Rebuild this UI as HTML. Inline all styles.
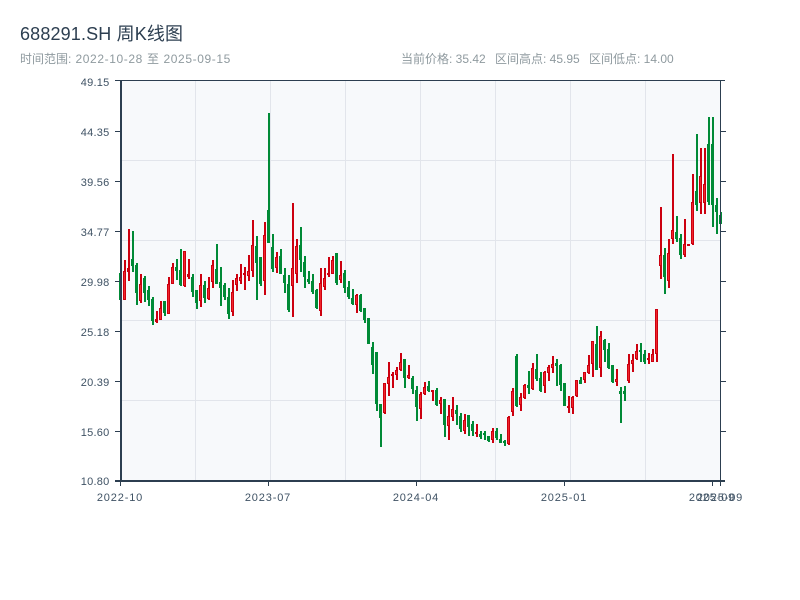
<!DOCTYPE html>
<html><head><meta charset="utf-8"><title>688291.SH 周K线图</title>
<style>
html,body{margin:0;padding:0;background:#fff;width:800px;height:600px;overflow:hidden}
svg{display:block;position:absolute;left:0;top:0}
text{font-family:"Liberation Sans","Noto Sans CJK SC",sans-serif}
.t{font-size:18px;fill:#2c3e50;letter-spacing:.15px}
.s{font-size:12px;fill:#8f9a9f}
.a{font-size:11px;fill:#3f5264;letter-spacing:.25px}
.x{font-size:11px;fill:#3f5264;letter-spacing:.85px}
.d{letter-spacing:.6px}
</style></head><body>
<svg width="800" height="600" viewBox="0 0 800 600" xmlns="http://www.w3.org/2000/svg">
<rect x="120" y="81" width="600" height="400" fill="#f7f9fb"/>
<path shape-rendering="crispEdges" fill="#e2e5eb" d="M195 81h1v400h-1zM270 81h1v400h-1zM345 81h1v400h-1zM420 81h1v400h-1zM495 81h1v400h-1zM570 81h1v400h-1zM645 81h1v400h-1zM120 160h600v1h-600zM120 240h600v1h-600zM120 320h600v1h-600zM120 400h600v1h-600z"/>
<path shape-rendering="crispEdges" fill="#008a36" d="M120 273h2V300h-2zM132 231h2V272h-2zM136 263h2V305h-2zM144 276h2V302h-2zM148 286h2V306h-2zM152 297h2V325h-2zM164 301h2V316h-2zM176 259h2V280h-2zM180 249h2V286h-2zM192 274h2V297h-2zM196 290h2V309h-2zM204 281h2V303h-2zM216 244h2V284h-2zM220 267h2V306h-2zM224 283h2V300h-2zM228 288h2V319h-2zM256 236h2V300h-2zM260 257h2V286h-2zM268 113h2V243h-2zM272 234h2V272h-2zM280 249h2V274h-2zM284 268h2V293h-2zM288 275h2V312h-2zM300 227h2V272h-2zM304 256h2V288h-2zM308 271h2V284h-2zM312 274h2V294h-2zM316 289h2V309h-2zM336 253h2V285h-2zM344 270h2V293h-2zM348 281h2V299h-2zM352 289h2V305h-2zM360 294h2V312h-2zM364 308h2V323h-2zM368 318h2V344h-2zM372 342h2V374h-2zM376 352h2V411h-2zM380 404h2V447h-2zM404 359h2V388h-2zM412 376h2V394h-2zM416 386h2V421h-2zM428 381h2V392h-2zM436 388h2V406h-2zM444 399h2V437h-2zM456 405h2V425h-2zM460 413h2V432h-2zM468 415h2V436h-2zM472 421h2V436h-2zM480 431h2V439h-2zM484 431h2V440h-2zM488 436h2V442h-2zM496 428h2V440h-2zM500 434h2V443h-2zM504 440h2V446h-2zM516 354h2V407h-2zM528 371h2V394h-2zM536 354h2V381h-2zM540 372h2V392h-2zM556 359h2V386h-2zM560 364h2V391h-2zM564 383h2V406h-2zM580 377h2V384h-2zM596 326h2V370h-2zM604 339h2V362h-2zM608 343h2V369h-2zM612 365h2V383h-2zM620 387h2V423h-2zM624 386h2V401h-2zM640 343h2V362h-2zM644 350h2V364h-2zM664 248h2V294h-2zM676 216h2V242h-2zM680 234h2V259h-2zM696 134h2V211h-2zM708 117h2V205h-2zM712 117h2V227h-2zM716 198h2V234h-2zM720 212h2V224h-2z
M119 273h3V300h-3zM131 259h3V266h-3zM135 265h3V293h-3zM143 278h3V293h-3zM147 290h3V300h-3zM151 299h3V321h-3zM163 301h3V313h-3zM175 267h3V271h-3zM179 270h3V285h-3zM191 277h3V292h-3zM195 290h3V303h-3zM203 285h3V298h-3zM215 269h3V284h-3zM219 282h3V288h-3zM223 285h3V297h-3zM227 297h3V314h-3zM255 246h3V263h-3zM259 257h3V284h-3zM267 210h3V243h-3zM271 247h3V269h-3zM279 256h3V274h-3zM283 275h3V283h-3zM287 284h3V310h-3zM299 245h3V260h-3zM303 262h3V277h-3zM307 279h3V282h-3zM311 281h3V292h-3zM315 290h3V308h-3zM335 253h3V283h-3zM343 273h3V288h-3zM347 287h3V297h-3zM351 298h3V304h-3zM359 295h3V311h-3zM363 308h3V320h-3zM367 318h3V344h-3zM371 347h3V365h-3zM375 352h3V404h-3zM379 404h3V418h-3zM403 359h3V378h-3zM411 378h3V389h-3zM415 390h3V407h-3zM427 386h3V391h-3zM435 390h3V405h-3zM443 399h3V425h-3zM455 410h3V414h-3zM459 416h3V429h-3zM467 415h3V427h-3zM471 424h3V431h-3zM479 434h3V437h-3zM483 433h3V435h-3zM487 436h3V441h-3zM495 431h3V438h-3zM499 439h3V443h-3zM503 441h3V443h-3zM515 356h3V406h-3zM527 385h3V388h-3zM535 369h3V379h-3zM539 378h3V391h-3zM555 363h3V366h-3zM559 365h3V385h-3zM563 383h3V406h-3zM579 380h3V384h-3zM595 344h3V370h-3zM603 340h3V350h-3zM607 349h3V368h-3zM611 365h3V382h-3zM619 391h3V394h-3zM623 391h3V394h-3zM639 350h3V352h-3zM643 354h3V362h-3zM663 255h3V277h-3zM675 232h3V239h-3zM679 238h3V255h-3zM695 191h3V205h-3zM707 144h3V202h-3zM711 144h3V205h-3zM715 205h3V212h-3zM719 215h3V224h-3z"/>
<path shape-rendering="crispEdges" fill="#cc000f" d="M124 260h2V300h-2zM128 229h2V281h-2zM140 274h2V303h-2zM156 311h2V323h-2zM160 301h2V320h-2zM168 277h2V314h-2zM172 263h2V284h-2zM184 251h2V287h-2zM188 259h2V279h-2zM200 274h2V307h-2zM208 277h2V300h-2zM212 260h2V288h-2zM232 280h2V316h-2zM236 274h2V291h-2zM240 264h2V284h-2zM244 267h2V290h-2zM248 255h2V281h-2zM252 220h2V277h-2zM264 222h2V295h-2zM276 252h2V273h-2zM292 203h2V317h-2zM296 239h2V283h-2zM320 268h2V316h-2zM324 268h2V290h-2zM328 257h2V277h-2zM332 256h2V274h-2zM340 261h2V283h-2zM356 294h2V313h-2zM384 383h2V414h-2zM388 362h2V396h-2zM392 372h2V388h-2zM396 367h2V380h-2zM400 353h2V371h-2zM408 365h2V379h-2zM420 392h2V419h-2zM424 382h2V395h-2zM432 390h2V401h-2zM440 397h2V414h-2zM448 405h2V440h-2zM452 397h2V421h-2zM464 414h2V434h-2zM476 424h2V437h-2zM492 428h2V443h-2zM508 416h2V445h-2zM512 388h2V416h-2zM520 393h2V411h-2zM524 384h2V399h-2zM532 363h2V390h-2zM544 371h2V393h-2zM548 365h2V381h-2zM552 356h2V373h-2zM568 396h2V413h-2zM572 396h2V414h-2zM576 380h2V397h-2zM584 372h2V383h-2zM588 355h2V374h-2zM592 341h2V377h-2zM600 331h2V377h-2zM616 369h2V386h-2zM628 354h2V383h-2zM632 354h2V372h-2zM636 344h2V360h-2zM648 353h2V364h-2zM652 349h2V362h-2zM656 309h2V362h-2zM660 207h2V279h-2zM668 239h2V288h-2zM672 154h2V244h-2zM684 219h2V257h-2zM688 244h2V246h-2zM692 174h2V245h-2zM700 148h2V214h-2zM704 148h2V214h-2z
M123 271h3V300h-3zM127 268h3V272h-3zM139 284h3V301h-3zM155 319h3V322h-3zM159 308h3V320h-3zM167 284h3V314h-3zM171 267h3V284h-3zM183 251h3V286h-3zM187 274h3V277h-3zM199 285h3V301h-3zM207 288h3V299h-3zM211 265h3V282h-3zM231 292h3V312h-3zM235 278h3V285h-3zM239 277h3V281h-3zM243 273h3V275h-3zM247 271h3V276h-3zM251 245h3V271h-3zM263 235h3V281h-3zM275 257h3V268h-3zM291 268h3V286h-3zM295 246h3V274h-3zM319 283h3V311h-3zM323 278h3V287h-3zM327 273h3V275h-3zM331 260h3V274h-3zM339 275h3V280h-3zM355 295h3V305h-3zM383 383h3V413h-3zM387 377h3V384h-3zM391 374h3V376h-3zM395 370h3V375h-3zM399 362h3V370h-3zM407 375h3V378h-3zM419 394h3V409h-3zM423 387h3V394h-3zM431 390h3V392h-3zM439 400h3V404h-3zM447 416h3V426h-3zM451 409h3V417h-3zM463 420h3V431h-3zM475 432h3V434h-3zM491 431h3V440h-3zM507 417h3V444h-3zM511 391h3V412h-3zM519 397h3V405h-3zM523 385h3V398h-3zM531 368h3V389h-3zM543 372h3V386h-3zM547 367h3V373h-3zM551 364h3V368h-3zM567 406h3V408h-3zM571 397h3V408h-3zM575 380h3V396h-3zM583 372h3V380h-3zM587 365h3V373h-3zM591 341h3V364h-3zM599 336h3V368h-3zM615 379h3V382h-3zM627 364h3V381h-3zM631 360h3V364h-3zM635 351h3V359h-3zM647 358h3V360h-3zM651 354h3V362h-3zM655 309h3V354h-3zM659 255h3V266h-3zM667 253h3V281h-3zM671 230h3V239h-3zM683 244h3V255h-3zM687 244h3V246h-3zM691 202h3V244h-3zM699 176h3V203h-3zM703 184h3V203h-3z"/>
<path shape-rendering="crispEdges" fill="#f0262c" d="M124 272h1V299h-1zM140 285h1V300h-1zM160 309h1V319h-1zM168 285h1V313h-1zM172 268h1V283h-1zM184 252h1V285h-1zM200 286h1V300h-1zM208 289h1V298h-1zM212 266h1V281h-1zM232 293h1V311h-1zM236 279h1V284h-1zM240 278h1V280h-1zM248 272h1V275h-1zM252 246h1V270h-1zM264 236h1V280h-1zM276 258h1V267h-1zM292 269h1V285h-1zM296 247h1V273h-1zM320 284h1V310h-1zM324 279h1V286h-1zM332 261h1V273h-1zM340 276h1V279h-1zM356 296h1V304h-1zM384 384h1V412h-1zM388 378h1V383h-1zM396 371h1V374h-1zM400 363h1V369h-1zM408 376h1V377h-1zM420 395h1V408h-1zM424 388h1V393h-1zM440 401h1V403h-1zM448 417h1V425h-1zM452 410h1V416h-1zM464 421h1V430h-1zM492 432h1V439h-1zM508 418h1V443h-1zM512 392h1V411h-1zM520 398h1V404h-1zM524 386h1V397h-1zM532 369h1V388h-1zM544 373h1V385h-1zM548 368h1V372h-1zM552 365h1V367h-1zM572 398h1V407h-1zM576 381h1V395h-1zM584 373h1V379h-1zM588 366h1V372h-1zM592 342h1V363h-1zM600 337h1V367h-1zM616 380h1V381h-1zM628 365h1V380h-1zM632 361h1V363h-1zM636 352h1V358h-1zM652 355h1V361h-1zM656 310h1V353h-1zM660 256h1V265h-1zM668 254h1V280h-1zM672 231h1V238h-1zM684 245h1V254h-1zM692 203h1V243h-1zM700 177h1V202h-1zM704 185h1V202h-1z"/>
<path shape-rendering="crispEdges" fill="#2c3e50" d="M120 81h2v400h-2zM720 81h1v400h-1zM115 80h610v1H115zM115 480h610v2H115zM115 131h5v1h-5zM115 181h5v1h-5zM115 231h5v1h-5zM115 281h5v1h-5zM115 331h5v1h-5zM115 381h5v1h-5zM115 431h5v1h-5zM721 131h5v1h-5zM721 181h5v1h-5zM721 231h5v1h-5zM721 281h5v1h-5zM721 331h5v1h-5zM721 381h5v1h-5zM721 431h5v1h-5zM120 482h1v4h-1zM268 482h1v4h-1zM416 482h1v4h-1zM564 482h1v4h-1zM712 482h1v4h-1zM720 482h1v4h-1z"/>
<text class="t" x="20" y="40">688291.SH 周K线图</text>
<text class="s" x="20" y="63">时间范围:</text>
<text class="s d" x="75.5" y="63">2022-10-28</text>
<text class="s" x="147" y="63">至</text>
<text class="s d" x="163.5" y="63">2025-09-15</text>
<text class="s" x="401" y="63">当前价格: 35.42</text>
<text class="s" x="495" y="63">区间高点: 45.95</text>
<text class="s" x="589" y="63">区间低点: 14.00</text>
<g text-anchor="end">
<text class="a" x="109.5" y="86">49.15</text>
<text class="a" x="109.5" y="136">44.35</text>
<text class="a" x="109.5" y="186">39.56</text>
<text class="a" x="109.5" y="236">34.77</text>
<text class="a" x="109.5" y="286">29.98</text>
<text class="a" x="109.5" y="336">25.18</text>
<text class="a" x="109.5" y="386">20.39</text>
<text class="a" x="109.5" y="436">15.60</text>
<text class="a" x="109.5" y="485">10.80</text>
</g>
<g text-anchor="middle">
<text class="x" x="120" y="501">2022-10</text>
<text class="x" x="268" y="501">2023-07</text>
<text class="x" x="416" y="501">2024-04</text>
<text class="x" x="564" y="501">2025-01</text>
<text class="x" x="712" y="501">2025-09</text>
<text class="x" x="720" y="501">2025-09</text>
</g>
</svg>
</body></html>
